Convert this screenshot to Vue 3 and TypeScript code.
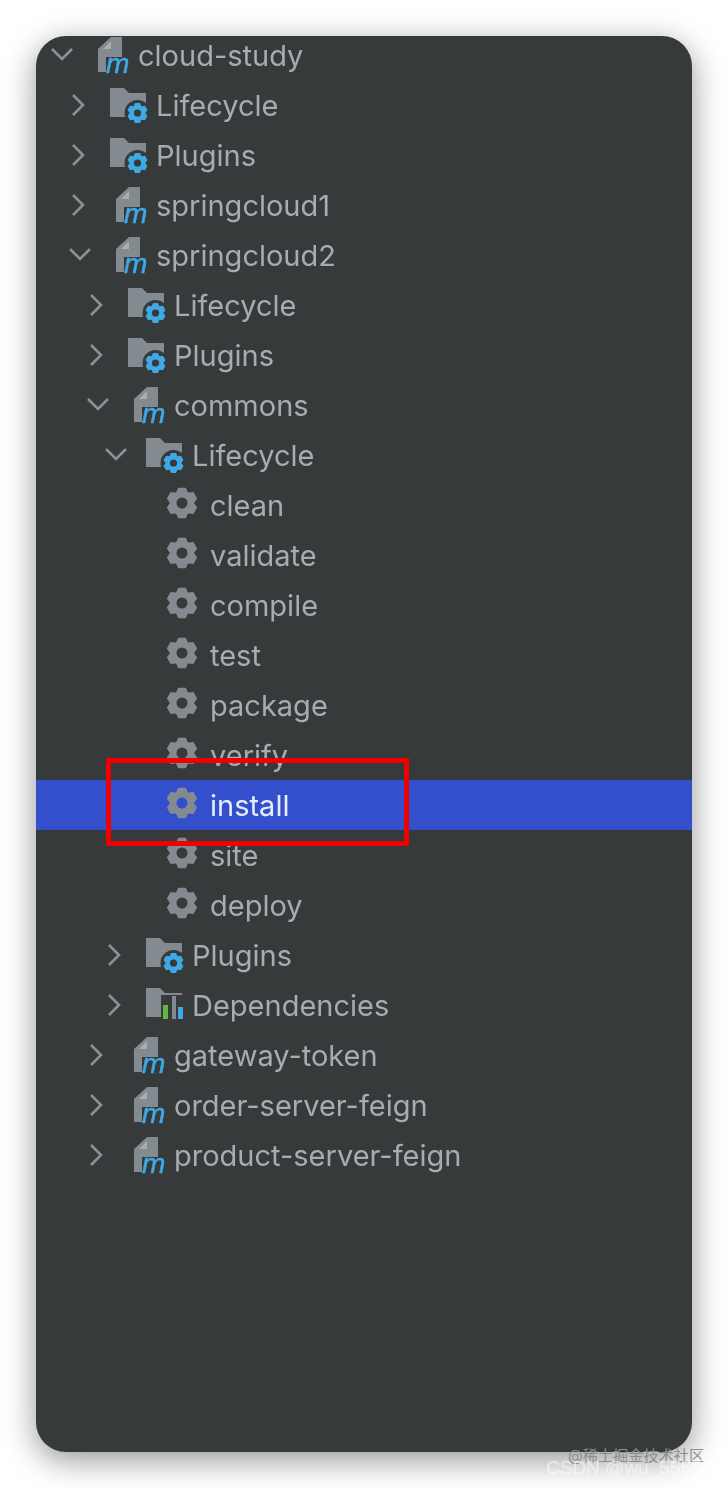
<template>
  <div class="page">
    <div class="card">
      <div class="tree">
        <div
          v-for="row in rows"
          :key="row.id"
          class="row"
          :class="{ selected: row.selected }"
          :style="{ paddingLeft: 14 + row.depth * 18 + 'px' }"
        >
          <span class="arrow">
            <svg v-if="row.open === true" width="24" height="20" viewBox="0 0 24 20">
              <path d="M2 4 L12 14 L22 4" />
            </svg>
            <svg v-else-if="row.open === false" width="24" height="24" viewBox="0 0 24 24">
              <path d="M5 2 L15 12 L5 22" />
            </svg>
          </span>

          <span class="icon">
            <svg width="47" height="44" viewBox="0 0 47 44">
              <template v-if="row.kind === 'module'">
                <path class="grey" d="M6 15 L19 3 H30 V38 H6 Z" />
                <path class="fold" d="M11 15 H19 V7 Z" />
                <path class="cut" d="M14 23 H42 V41 H14 Z" />
                <text class="m" x="14" y="39">m</text>
              </template>
              <template v-else-if="row.kind === 'folder' || row.kind === 'deps'">
                <path class="grey" d="M0 4 H14 L19 9 H36 V33 H0 Z" />
                <template v-if="row.kind === 'folder'">
                  <circle class="cut" cx="27.5" cy="29" r="13" />
                  <path class="blue" fill-rule="evenodd" transform="translate(17 18.5) scale(0.656)" :d="gearPath" />
                </template>
                <template v-else>
                  <path class="cut" d="M15 11 H39 V37 H15 Z" />
                  <path class="green" d="M17 21 H22 V35 H17 Z" />
                  <path class="grey" d="M26 12 H30 V35 H26 Z" />
                  <path class="blue" d="M32 23 H37 V35 H32 Z" />
                </template>
              </template>
              <path
                v-else
                class="grey"
                fill-rule="evenodd"
                transform="translate(2 3)"
                :d="gearPath"
              />
            </svg>
          </span>

          <span class="label">{{ row.label }}</span>
        </div>
      </div>
      <div class="red-box"></div>
    </div>
    <div class="mark-one">@稀土掘金技术社区</div>
    <div class="mark-two">CSDN @wu_55555</div>
  </div>
</template>

<script setup lang="ts">
type Kind = 'module' | 'folder' | 'deps' | 'goal'

interface Row {
  id: number
  label: string
  depth: number
  kind: Kind
  open?: boolean
  selected?: boolean
}

function makeGear(): string {
  const c = 16
  let d = ''
  for (let i = 0; i < 6; i++) {
    const a = (i * Math.PI) / 3 - Math.PI / 2
    const pts: [number, number][] = [
      [12.2, -0.5],
      [15.8, -0.24],
      [15.8, 0.24],
      [12.2, 0.5]
    ]
    for (const [r, o] of pts) {
      const x = c + r * Math.cos(a + o)
      const y = c + r * Math.sin(a + o)
      d += (d ? 'L' : 'M') + x.toFixed(2) + ' ' + y.toFixed(2) + ' '
    }
  }
  d += 'Z M21.5 16 A5.5 5.5 0 1 0 10.5 16 A5.5 5.5 0 1 0 21.5 16 Z'
  return d
}

const gearPath = makeGear()

const source: Omit<Row, 'id'>[] = [
  { label: 'cloud-study', depth: 0, kind: 'module', open: true },
  { label: 'Lifecycle', depth: 1, kind: 'folder', open: false },
  { label: 'Plugins', depth: 1, kind: 'folder', open: false },
  { label: 'springcloud1', depth: 1, kind: 'module', open: false },
  { label: 'springcloud2', depth: 1, kind: 'module', open: true },
  { label: 'Lifecycle', depth: 2, kind: 'folder', open: false },
  { label: 'Plugins', depth: 2, kind: 'folder', open: false },
  { label: 'commons', depth: 2, kind: 'module', open: true },
  { label: 'Lifecycle', depth: 3, kind: 'folder', open: true },
  { label: 'clean', depth: 4, kind: 'goal' },
  { label: 'validate', depth: 4, kind: 'goal' },
  { label: 'compile', depth: 4, kind: 'goal' },
  { label: 'test', depth: 4, kind: 'goal' },
  { label: 'package', depth: 4, kind: 'goal' },
  { label: 'verify', depth: 4, kind: 'goal' },
  { label: 'install', depth: 4, kind: 'goal', selected: true },
  { label: 'site', depth: 4, kind: 'goal' },
  { label: 'deploy', depth: 4, kind: 'goal' },
  { label: 'Plugins', depth: 3, kind: 'folder', open: false },
  { label: 'Dependencies', depth: 3, kind: 'deps', open: false },
  { label: 'gateway-token', depth: 2, kind: 'module', open: false },
  { label: 'order-server-feign', depth: 2, kind: 'module', open: false },
  { label: 'product-server-feign', depth: 2, kind: 'module', open: false }
]

const rows: Row[] = source.map((r, i) => ({ ...r, id: i }))
</script>

<style scoped>
.page {
  position: relative;
  width: 728px;
  height: 1488px;
  padding: 36px;
  box-sizing: border-box;
  background: #fff;
  overflow: hidden;
  font-family: Inter, "Noto Sans CJK SC", sans-serif;
}

.card {
  position: relative;
  height: 1416px;
  background: #363a3b;
  border-radius: 30px;
  box-shadow: 0 8px 32px rgba(0, 0, 0, 0.42);
  overflow: hidden;
}

.tree {
  margin-top: -6px;
  filter: blur(0.7px);
}

.row {
  display: flex;
  align-items: center;
  height: 50px;
  box-sizing: border-box;
}

.row.selected {
  background: #344fcb;
}

.arrow {
  flex: none;
  width: 42px;
  height: 24px;
  display: flex;
  align-items: center;
}

.arrow svg {
  fill: none;
  stroke: #8d9194;
  stroke-width: 2.6;
}

.icon {
  flex: none;
  width: 46px;
  height: 44px;
  margin-top: 2px;
  display: block;
}

.icon svg {
  display: block;
  overflow: visible;
}

.grey {
  fill: #848b90;
}

.fold {
  fill: #a9aeb2;
}

.cut {
  fill: #363a3b;
}

.blue {
  fill: #3fa9e5;
}

.green {
  fill: #62b543;
}

.m {
  font-family: "Liberation Sans", sans-serif;
  font-style: italic;
  font-weight: 400;
  font-size: 28px;
  stroke: #3fa9e5;
  stroke-width: 0.5;
  fill: #3fa9e5;
}

.label {
  margin-top: 2px;
  font-size: 29px;
  line-height: 50px;
  color: #a8acaf;
  white-space: nowrap;
}

.selected .label {
  color: #e6ecfb;
}

.red-box {
  position: absolute;
  left: 70px;
  top: 722px;
  width: 303px;
  height: 88px;
  box-sizing: border-box;
  border: 5px solid #f00000;
}

.mark-one {
  position: absolute;
  left: 568px;
  top: 1447px;
  font-size: 15.2px;
  line-height: 18px;
  color: #8e8e8e;
  white-space: nowrap;
}

.mark-two {
  position: absolute;
  left: 546px;
  top: 1458px;
  font-family: "Liberation Sans", sans-serif;
  font-size: 19px;
  line-height: 20px;
  color: rgba(255, 255, 255, 0.55);
  white-space: nowrap;
}
</style>
